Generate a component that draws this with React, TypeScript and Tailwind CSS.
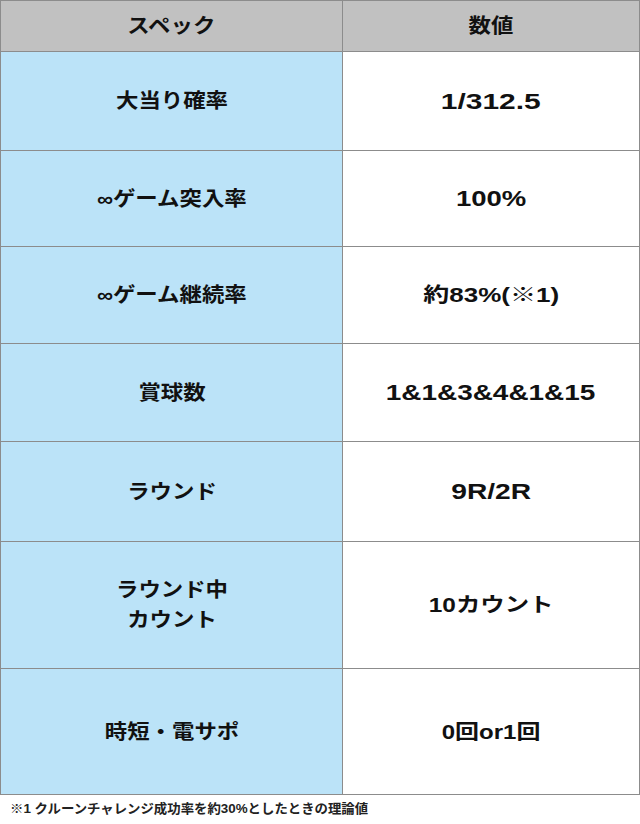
import React from "react";

const font = { fontFamily: '"Liberation Sans", "Noto Sans CJK JP", sans-serif' };

type Row = { h: string; label: React.ReactNode; value: React.ReactNode };

const rows: Row[] = [
  {
    h: "h-[99px]",
    label: <span className="inline-block scale-x-[1.12]">大当り確率</span>,
    value: <span className="inline-block scale-x-[1.36] text-[22px]">1/312.5</span>,
  },
  {
    h: "h-[96px]",
    label: <span className="inline-block scale-x-[1.12]">∞ゲーム突入率</span>,
    value: <span className="inline-block scale-x-[1.25] text-[22px]">100%</span>,
  },
  {
    h: "h-[97px]",
    label: <span className="inline-block scale-x-[1.12]">∞ゲーム継続率</span>,
    value: <span className="inline-block scale-x-[1.3]">約83%(※1)</span>,
  },
  {
    h: "h-[98px]",
    label: <span className="inline-block scale-x-[1.12]">賞球数</span>,
    value: <span className="inline-block scale-x-[1.27] text-[22px]">1&amp;1&amp;3&amp;4&amp;1&amp;15</span>,
  },
  {
    h: "h-[100px]",
    label: <span className="inline-block scale-x-[1.12]">ラウンド</span>,
    value: <span className="inline-block scale-x-[1.28] text-[22px]">9R/2R</span>,
  },
  {
    h: "h-[127px]",
    label: (
      <span className="inline-block scale-x-[1.12] leading-[30px]">
        ラウンド中
        <br />
        カウント
      </span>
    ),
    value: <span className="inline-block scale-x-[1.22]">10カウント</span>,
  },
  {
    h: "h-[125px]",
    label: <span className="inline-block scale-x-[1.12]">時短・電サポ</span>,
    value: <span className="inline-block scale-x-[1.2]">0回or1回</span>,
  },
];

export default function App() {
  return (
    <div className="w-[640px] h-[824px] bg-white text-[#111111]" style={font}>
      <div className="w-[640px] border border-[#8c8c8c]">
        <div className="grid grid-cols-[342px_1fr] h-[51px] border-b border-[#8c8c8c] bg-[#c1c1c1]">
          <div className="flex items-center justify-center border-r border-[#8c8c8c] text-[20px] font-bold">
            <span className="inline-block scale-x-[1.12]">スペック</span>
          </div>
          <div className="flex items-center justify-center text-[20px] font-bold">
            <span className="inline-block scale-x-[1.12]">数値</span>
          </div>
        </div>
        {rows.map((r, i) => (
          <div
            key={i}
            className={`grid grid-cols-[342px_1fr] ${r.h} ${i < rows.length - 1 ? "border-b border-[#8c8c8c]" : ""}`}
          >
            <div className="flex items-center justify-center text-center border-r border-[#8c8c8c] bg-[#bbe3f8] text-[20px] font-bold">
              {r.label}
            </div>
            <div className="flex items-center justify-center text-center bg-white text-[20px] font-bold">
              {r.value}
            </div>
          </div>
        ))}
      </div>
      <div className="pl-[10px] pt-[6px] text-[13px] font-bold leading-[16px] text-[#222222]">
        <span className="inline-block origin-left scale-x-[1.03]">※1 クルーンチャレンジ成功率を約30%としたときの理論値</span>
      </div>
    </div>
  );
}
